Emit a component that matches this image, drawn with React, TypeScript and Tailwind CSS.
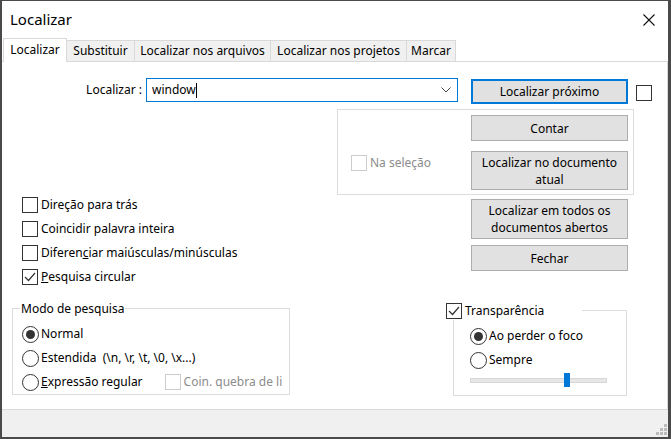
import React from "react";

function Box({ checked, disabled }: { checked?: boolean; disabled?: boolean }) {
  return (
    <span
      className={`w-[16px] h-[16px] border ${disabled ? "border-[#cccccc]" : "border-[#333333]"} bg-white flex items-center justify-center shrink-0`}
    >
      {checked && (
        <svg width="12" height="10" viewBox="0 0 12 10">
          <path d="M1 5 L4.5 8.5 L11 1" fill="none" stroke="#333333" strokeWidth="1.2" />
        </svg>
      )}
    </span>
  );
}

function Radio({ on }: { on?: boolean }) {
  return (
    <span className="w-[17px] h-[17px] rounded-full border border-[#333333] bg-white flex items-center justify-center shrink-0">
      {on && <span className="w-[9px] h-[9px] rounded-full bg-[#333333]" />}
    </span>
  );
}

function Btn({ children, cls, focus }: { children: React.ReactNode; cls: string; focus?: boolean }) {
  return (
    <div
      className={`w-[157px] ${cls} ${focus ? "border-2 border-[#0078d7]" : "border border-[#adadad]"} bg-[#e1e1e1] flex items-center justify-center text-center leading-[17px]`}
    >
      {children}
    </div>
  );
}

export default function App() {
  return (
    <div className="w-[671px] h-[439px] bg-[#4a4a4a] pt-[1px] pl-[2px] pr-[3px] pb-[2px] font-['Segoe_UI','Noto_Sans',sans-serif] text-[12px] text-black overflow-hidden">
      <div className="w-[666px] h-[436px] bg-white flex flex-col">
        {/* title bar */}
        <div className="h-[37px] flex items-center justify-between shrink-0">
          <span className="ml-[8px] text-[15px] text-black">Localizar</span>
          <svg className="mr-[13px]" width="12" height="12" viewBox="0 0 12 12">
            <path d="M0.5 0.5 L11.5 11.5 M11.5 0.5 L0.5 11.5" stroke="#111111" strokeWidth="1.1" />
          </svg>
        </div>
        {/* tabs */}
        <div className="h-[24px] flex items-end shrink-0 relative">
          <div className="absolute left-0 right-0 bottom-0 h-[1px] bg-[#d9d9d9]" />
          <div className="ml-[1px] w-[64px] h-[24px] bg-white border border-b-0 border-[#d9d9d9] relative z-10 flex items-center justify-center pb-[1px]">
            Localizar
          </div>
          <div className="w-[68px] h-[22px] bg-[#f0f0f0] border border-l-0 border-[#d9d9d9] flex items-center justify-center">Substituir</div>
          <div className="w-[136px] h-[22px] bg-[#f0f0f0] border border-l-0 border-[#d9d9d9] flex items-center justify-center">Localizar nos arquivos</div>
          <div className="w-[136px] h-[22px] bg-[#f0f0f0] border border-l-0 border-[#d9d9d9] flex items-center justify-center">Localizar nos projetos</div>
          <div className="w-[49px] h-[22px] bg-[#f0f0f0] border border-l-0 border-[#d9d9d9] flex items-center justify-center">Marcar</div>
        </div>
        {/* panel */}
        <div className="h-[347px] shrink-0 border-r border-[#d9d9d9] flex flex-col">
          {/* row 1 */}
          <div className="mt-[16px] flex items-start">
            <div className="w-[140px] h-[24px] flex items-center justify-end">Localizar :</div>
            <div className="ml-[4px] w-[312px] h-[24px] border border-[#0078d7] flex items-center pl-[5px] pr-[6px]">
              <span>window</span>
              <span className="w-[1px] h-[15px] bg-black" />
              <span className="flex-1" />
              <svg width="10" height="6" viewBox="0 0 10 6">
                <path d="M0.5 0.5 L5 5 L9.5 0.5" fill="none" stroke="#444444" strokeWidth="1" />
              </svg>
            </div>
            <div className="ml-[13px] mt-[1px]">
              <Btn cls="h-[25px]" focus>Localizar próximo</Btn>
            </div>
            <div className="ml-[8px] mt-[7px]">
              <Box />
            </div>
          </div>
          {/* row 2: group */}
          <div className="mt-[5px] ml-[335px] w-[297px] h-[86px] border border-[#dcdcdc] flex">
            <div className="w-[133px] pl-[13px] flex items-center gap-[3px] text-[#8c8c8c] mt-[22px]">
              <Box disabled />
              <span>Na seleção</span>
            </div>
            <div className="mt-[5px] flex flex-col gap-[10px]">
              <Btn cls="h-[26px]">Contar</Btn>
              <Btn cls="h-[39px]">
                Localizar no documento
                <br />
                atual
              </Btn>
            </div>
          </div>
          {/* row 3 */}
          <div className="mt-[2px] flex">
            <div className="w-[469px] pl-[20px] mt-[-4px] flex flex-col">
              {[
                ["Direção para trás", false],
                ["Coincidir palavra inteira", false],
                ["diff", false],
                ["circ", true],
              ].map(([t, c], i) => (
                <div key={i} className="h-[24px] flex items-center gap-[3px]">
                  <Box checked={c as boolean} />
                  <span>
                    {t === "diff" ? (
                      <>
                        Diferen<u>c</u>iar maiúsculas/minúsculas
                      </>
                    ) : t === "circ" ? (
                      <>
                        <u>P</u>esquisa circular
                      </>
                    ) : (
                      (t as string)
                    )}
                  </span>
                </div>
              ))}
            </div>
            <div className="mt-[2px] flex flex-col gap-[6px]">
              <Btn cls="h-[40px]">
                Localizar em todos os
                <br />
                documentos abertos
              </Btn>
              <Btn cls="h-[26px]">Fechar</Btn>
            </div>
          </div>
          {/* row 4 */}
          <div className="mt-[13px] flex items-start">
            <div className="ml-[10px] mt-[6px] w-[278px] h-[87px] border border-[#dcdcdc] relative flex flex-col pl-[9px] pt-[13px]">
              <span className="absolute left-[7px] top-[-8px] bg-white px-[1px] leading-[16px]">Modo de pesquisa</span>
              <div className="h-[24px] flex items-center gap-[2px]">
                <Radio on />
                <span>Normal</span>
              </div>
              <div className="h-[24px] flex items-center gap-[2px]">
                <Radio />
                <span>Estendida&nbsp; (\n, \r, \t, \0, \x...)</span>
              </div>
              <div className="h-[24px] flex items-center gap-[2px]">
                <Radio />
                <span>
                  <u>E</u>xpressão regular
                </span>
                <span className="ml-[20px] flex items-center gap-[3px] text-[#8c8c8c] whitespace-nowrap">
                  <Box disabled />
                  <span>Coin. quebra de li</span>
                </span>
              </div>
            </div>
            <div className="ml-[156px] flex flex-col">
              <div className="flex items-start">
                <div className="flex items-center gap-[3px] bg-white relative z-10 pr-[38px]">
                  <Box checked />
                  <span>Transparência</span>
                </div>
              </div>
              <div className="ml-[7px] mt-[-10px] w-[174px] h-[86px] border border-[#dcdcdc] flex flex-col pl-[16px] pt-[13px]">
                <div className="h-[24px] flex items-center gap-[2px]">
                  <Radio on />
                  <span>Ao perder o foco</span>
                </div>
                <div className="h-[24px] flex items-center gap-[2px]">
                  <Radio />
                  <span>Sempre</span>
                </div>
                <div className="mt-[1px] w-[137px] h-[14px] relative flex items-center">
                  <div className="w-full h-[5px] bg-[#e7e7e7] border border-[#d6d6d6]" />
                  <div className="absolute left-[94px] top-0 w-[6px] h-[14px] bg-[#0078d7]" />
                </div>
              </div>
            </div>
          </div>
        </div>
        {/* bottom bar */}
        <div className="flex-1 bg-[#f0f0f0] border-t border-[#dadada] flex items-end justify-end">
          <svg width="12" height="12" viewBox="0 0 12 12" className="mb-[1px]">
            <rect x="8" y="0" width="3" height="3" fill="#bcbcbc" />
            <rect x="4" y="4" width="3" height="3" fill="#bcbcbc" />
            <rect x="8" y="4" width="3" height="3" fill="#bcbcbc" />
            <rect x="0" y="8" width="3" height="3" fill="#bcbcbc" />
            <rect x="4" y="8" width="3" height="3" fill="#bcbcbc" />
            <rect x="8" y="8" width="3" height="3" fill="#bcbcbc" />
          </svg>
        </div>
      </div>
    </div>
  );
}
